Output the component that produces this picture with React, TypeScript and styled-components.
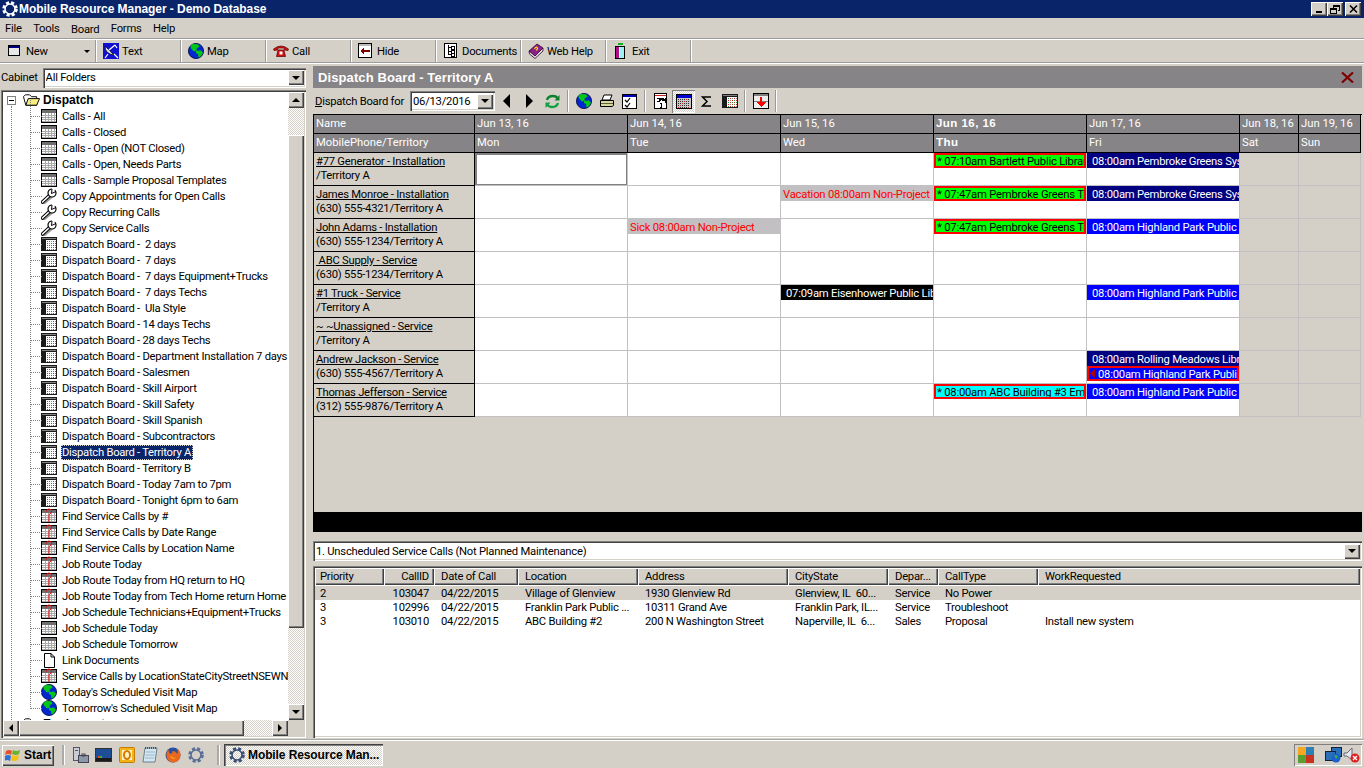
import React from 'react';
import styled, { createGlobalStyle, css } from 'styled-components';

const face = '#d4d0c8';
const headGray = '#868486';
const gridLine = '#c2c0c2';
const uiFont = `Roboto, 'Liberation Sans', Arial, sans-serif`;
const boldFont = `'Liberation Sans', Arial, sans-serif`;

const raised = css`
  box-shadow: inset 1px 1px #fff, inset -1px -1px #404040, inset -2px -2px #808080;
`;
const sunken = css`
  box-shadow: inset 1px 1px #808080, inset 2px 2px #404040, inset -1px -1px #fff, inset -2px -2px ${face};
`;
const dither = css`
  background: repeating-conic-gradient(#fff 0 25%, ${face} 0 50%) 0 0 / 2px 2px;
`;

const GlobalStyle = createGlobalStyle`
  html, body {
    margin: 0;
    padding: 0;
    width: 1364px;
    height: 768px;
    overflow: hidden;
    background: ${face};
    font-family: ${uiFont};
    font-size: 11.25px;
    letter-spacing: -0.25px;
    color: #000;
  }
  * { box-sizing: border-box; }
`;

const Page = styled.div`
  width: 1364px;
  height: 768px;
  display: flex;
  flex-flow: column;
  overflow: hidden;
`;

/* ---------- window chrome ---------- */

const TitleBar = styled.div`
  height: 18px;
  flex: none;
  display: flex;
  align-items: center;
  background: #0a246a;
  color: #fff;
  font-family: ${boldFont};
  font-weight: bold;
  font-size: 12px;
  padding: 0 3px 0 2px;
`;
const TitleText = styled.span`
  flex: 1;
  margin-left: 1px;
  letter-spacing: -0.05px;
`;
const WinButton = styled.div<{ $gap?: number }>`
  width: 16px;
  height: 14px;
  display: flex;
  align-items: center;
  justify-content: center;
  background: ${face};
  margin-left: ${(p) => p.$gap ?? 0}px;
  ${raised}
`;

const MenuBar = styled.div`
  height: 20px;
  flex: none;
  display: flex;
  align-items: center;
  padding-left: 5px;
  gap: 11.5px;
`;
const MenuItem = styled.span<{ $low?: boolean }>`
  position: relative;
  top: ${(p) => (p.$low ? 1 : 0)}px;
`;

const ToolBar = styled.div`
  height: 26px;
  flex: none;
  display: flex;
  border-top: 1px solid #9a9a9a;
  box-shadow: inset 0 1px #fff;
  border-bottom: 1px solid #fff;
  padding: 1px 0 1px;
  position: relative;
  &::after {
    content: '';
    position: absolute;
    left: 0;
    right: 0;
    bottom: 0;
    height: 1px;
    background: #9a9a9a;
  }
`;
const ToolButton = styled.div<{ $width?: number }>`
  width: ${(p) => p.$width ?? 85}px;
  flex: none;
  display: flex;
  align-items: center;
  gap: 3px;
  padding-left: 6px;
  border-right: 1px solid #9a9a9a;
  box-shadow: 1px 0 #fff;
  position: relative;
`;
const ToolIconSlot = styled.span`
  display: inline-flex;
  width: 17px;
  justify-content: center;
  flex: none;
`;
const DropMark = styled.span`
  position: absolute;
  right: 5px;
  top: 10px;
  border: 3px solid transparent;
  border-top: 3px solid #000;
  border-bottom: 0;
`;

/* ---------- main split ---------- */

const Main = styled.div`
  flex: 1;
  min-height: 0;
  display: flex;
  padding-right: 2px;
`;

const LeftPane = styled.div`
  width: 313px;
  flex: none;
  display: flex;
  flex-flow: column;
  padding: 3px 7px 1px 1px;
`;
const CabinetRow = styled.div`
  height: 23px;
  flex: none;
  display: flex;
  align-items: center;
  gap: 5px;
  padding-bottom: 2px;
`;
const Combo = styled.div<{ $h?: number }>`
  flex: 1;
  height: ${(p) => p.$h ?? 20}px;
  background: #fff;
  display: flex;
  align-items: center;
  padding: 0 2px 0 3px;
  ${sunken}
`;
const ComboText = styled.span`
  flex: 1;
  white-space: nowrap;
  overflow: hidden;
`;
const ArrowBtn = styled.div<{ $size?: number; $h?: number }>`
  width: ${(p) => p.$size ?? 16}px;
  height: ${(p) => p.$h ?? p.$size ?? 16}px;
  flex: none;
  display: flex;
  align-items: center;
  justify-content: center;
  background: ${face};
  ${raised}
`;
const Tri = styled.span<{ $dir: 'up' | 'down' | 'left' | 'right'; $s?: number; $c?: string }>`
  width: 0;
  height: 0;
  border: ${(p) => p.$s ?? 4}px solid transparent;
  ${(p) => {
    const c = p.$c ?? '#000';
    if (p.$dir === 'up') return `border-bottom-color:${c};border-top:0;`;
    if (p.$dir === 'down') return `border-top-color:${c};border-bottom:0;`;
    if (p.$dir === 'left') return `border-right-color:${c};border-left:0;`;
    return `border-left-color:${c};border-right:0;`;
  }}
`;

const TreeBox = styled.div`
  flex: 1;
  min-height: 0;
  display: grid;
  grid-template-columns: 1fr 16px;
  grid-template-rows: 1fr 16px;
  padding: 2px;
  background: #fff;
  ${sunken}
`;
const TreeBody = styled.div`
  position: relative;
  overflow: hidden;
  min-height: 0;
  background: #fff;
  &::before {
    content: '';
    position: absolute;
    left: 8px;
    top: 14px;
    bottom: 0;
    border-left: 1px dotted #808080;
  }
`;
const TreeHead = styled.div`
  height: 16px;
  display: flex;
  align-items: center;
  font-family: ${boldFont};
  font-weight: bold;
  font-size: 12px;
  letter-spacing: 0;
  padding-left: 4px;
  gap: 3px;
`;
const Plus = styled.span`
  width: 9px;
  height: 9px;
  flex: none;
  border: 1px solid #808080;
  position: relative;
  background: #fff;
  margin-right: 4px;
  &::after {
    content: '';
    position: absolute;
    left: 1px;
    right: 1px;
    top: 3px;
    height: 1px;
    background: #000;
  }
`;
const TreeRow = styled.div`
  height: 16px;
  position: relative;
  display: flex;
  align-items: center;
  padding-left: 38px;
  gap: 4px;
  white-space: nowrap;
  &::before {
    content: '';
    position: absolute;
    left: 27px;
    top: -8px;
    width: 11px;
    height: 16px;
    border-left: 1px dotted #808080;
    border-bottom: 1px dotted #808080;
  }
`;
const TreeLabel = styled.span<{ $selected?: boolean }>`
  padding: 0 2px 0 1px;
  height: 15px;
  line-height: 15px;
  letter-spacing: -0.28px;
  white-space: pre;
  ${(p) =>
    p.$selected &&
    css`
      background: #0a246a;
      color: #fff;
      outline: 1px dotted #d4d0c8;
      outline-offset: -1px;
    `}
`;

const VScroll = styled.div`
  display: flex;
  flex-flow: column;
  min-height: 0;
`;
const ScrollTrack = styled.div<{ $size: number }>`
  flex: ${(p) => (p.$size ? `none` : 1)};
  ${(p) => (p.$size ? `height:${p.$size}px;` : '')}
  ${dither}
`;
const VThumb = styled.div`
  flex: none;
  height: 493px;
  background: ${face};
  ${raised}
`;
const HScroll = styled.div`
  display: flex;
`;
const HTrack = styled.div`
  flex: 1;
  ${dither}
`;
const HThumb = styled.div`
  flex: none;
  width: 225px;
  background: ${face};
  ${raised}
`;
const Corner = styled.div`
  background: ${face};
`;

/* ---------- right side ---------- */

const RightPane = styled.div`
  flex: 1;
  min-width: 0;
  display: flex;
  flex-flow: column;
  padding: 2px 0 1px;
`;
const PanelTitle = styled.div`
  height: 22px;
  flex: none;
  background: ${headGray};
  color: #fff;
  font-family: ${boldFont};
  font-weight: bold;
  font-size: 13px;
  display: flex;
  align-items: center;
  justify-content: space-between;
  padding: 0 8px 0 5px;
  letter-spacing: 0.1px;
`;
const BoardBar = styled.div`
  height: 26px;
  flex: none;
  display: flex;
  align-items: center;
  padding-left: 2px;
`;
const BoardLabel = styled.span`
  width: 95px;
  flex: none;
  white-space: nowrap;
  u { text-underline-offset: 1px; }
`;
const DateBox = styled.div`
  width: 85px;
  height: 20px;
  flex: none;
  background: #fff;
  display: flex;
  align-items: center;
  padding: 0 2px 0 3px;
  ${sunken}
`;
const BarBtn = styled.div<{ $active?: boolean }>`
  width: 23px;
  height: 23px;
  flex: none;
  display: flex;
  align-items: center;
  justify-content: center;
  ${(p) =>
    p.$active &&
    css`
      ${dither}
      box-shadow: inset 1px 1px #808080, inset -1px -1px #fff;
    `}
`;
const BarSep = styled.div`
  width: 8px;
  height: 22px;
  flex: none;
  position: relative;
  &::before {
    content: '';
    position: absolute;
    left: 3px;
    top: 0;
    bottom: 0;
    width: 1px;
    background: #9a9a9a;
    box-shadow: 1px 0 #fff;
  }
`;

const Board = styled.div`
  height: 418px;
  flex: none;
  display: flex;
  flex-flow: column;
  border-left: 1px solid #000;
  position: relative;
  border-bottom: 20px solid #000;
`;
const BoardGrid = styled.div`
  display: grid;
  grid-template-columns: 161px repeat(5, 153px) 59px 62px;
  grid-template-rows: 19px 19px repeat(8, 33px);
  border-top: 1px solid #000;
  width: 1048px;
`;
const HeadCell = styled.div<{ $bold?: boolean }>`
  background: ${headGray};
  color: #fff;
  border-right: 1px solid #000;
  border-bottom: 1px solid #000;
  padding-left: 2px;
  line-height: 17px;
  white-space: nowrap;
  overflow: hidden;
  letter-spacing: 0;
  ${(p) => (p.$bold ? `font-family:${boldFont};font-weight:bold;font-size:11.5px;letter-spacing:0.45px;` : '')}
`;
const NameCell = styled.div`
  background: ${face};
  border-right: 1px solid #000;
  border-bottom: 1px solid #000;
  padding: 2px 0 0 2px;
  line-height: 14px;
  white-space: nowrap;
  overflow: hidden;
`;
const NameLine = styled.div`
  text-decoration: underline;
  text-underline-offset: 1px;
  white-space: pre;
`;
const DayCell = styled.div<{ $weekend?: boolean; $focus?: boolean }>`
  background: ${(p) => (p.$weekend ? face : '#fff')};
  border-right: 1px solid ${gridLine};
  border-bottom: 1px solid ${gridLine};
  overflow: hidden;
  display: flex;
  flex-flow: column;
  ${(p) => p.$focus && `box-shadow: inset 1px 1px #808080, inset -1px -1px #808080, inset 2px 2px #808080;`}
`;
type Kind = 'navy' | 'blue' | 'black' | 'green' | 'cyan' | 'off' | 'navyAlert';
const kindStyle: Record<Kind, string> = {
  navy: 'background:#000080;color:#fff;padding-left:5px;line-height:17px;',
  blue: 'background:#0000ff;color:#fff;padding-left:5px;line-height:17px;',
  black: 'background:#000;color:#fff;padding-left:5px;line-height:17px;',
  green: 'background:#00ff00;color:#000;border:2px solid #f00;padding-left:1px;line-height:13px;',
  cyan: 'background:#00ffff;color:#000;border:2px solid #f00;padding-left:1px;line-height:13px;',
  off: `background:#c2c0c2;color:#f00;padding-left:2px;line-height:17px;`,
  navyAlert: 'background:#0000ff;color:#fff;border:2px solid #f00;padding-left:9px;line-height:13px;',
};
const EventBar = styled.div<{ $kind: Kind }>`
  height: 15px;
  flex: none;
  white-space: pre;
  overflow: hidden;
  position: relative;
  letter-spacing: -0.22px;
  ${(p) => kindStyle[p.$kind]}
`;
const AlertMark = styled.span`
  position: absolute;
  left: 1px;
  top: 1px;
  width: 5px;
  height: 9px;
  background: #b00000;
  clip-path: polygon(100% 0, 100% 100%, 0 50%);
`;

const QueueCombo = styled(Combo)`
  flex: none;
  width: 100%;
  margin-top: 9px;
`;
const ListBox = styled.div`
  flex: 1;
  min-height: 0;
  margin-top: 5px;
  background: #fff;
  padding: 2px;
  ${sunken}
`;
const listColumns = '69px 50px 84px 120px 150px 100px 50px 100px 322px';
const ListHead = styled.div`
  display: grid;
  grid-template-columns: ${listColumns};
  height: 17px;
  margin-bottom: 1px;
`;
const ListHeadCell = styled.div<{ $right?: boolean; $first?: boolean }>`
  background: ${face};
  padding: 0 5px 0 ${(p) => (p.$first ? 5 : 7)}px;
  line-height: 17px;
  white-space: nowrap;
  overflow: hidden;
  text-align: ${(p) => (p.$right ? 'right' : 'left')};
  ${raised}
`;
const ListRow = styled.div<{ $selected?: boolean }>`
  display: grid;
  grid-template-columns: ${listColumns};
  height: 14px;
  line-height: 16px;
  background: ${(p) => (p.$selected ? face : '#fff')};
`;
const ListCell = styled.div<{ $right?: boolean; $first?: boolean }>`
  padding: 0 5px 0 ${(p) => (p.$first ? 5 : 7)}px;
  white-space: pre;
  overflow: hidden;
  text-align: ${(p) => (p.$right ? 'right' : 'left')};
`;

/* ---------- taskbar ---------- */

const TaskBar = styled.div`
  height: 29px;
  flex: none;
  display: flex;
  align-items: center;
  border-top: 1px solid #a8a8a8;
  box-shadow: inset 0 1px #fff;
  padding: 2px 2px 0 2px;
`;
const StartButton = styled.div`
  width: 52px;
  height: 21px;
  flex: none;
  display: flex;
  align-items: center;
  gap: 3px;
  padding-left: 3px;
  font-family: ${boldFont};
  font-weight: bold;
  font-size: 12px;
  letter-spacing: 0;
  ${raised}
`;
const TaskSep = styled.div<{ $left: number }>`
  width: 2px;
  height: 20px;
  flex: none;
  margin: 0 5px 0 ${(p) => p.$left}px;
  background: #aaa;
  box-shadow: 1px 0 #fff;
`;
const QuickIcon = styled.div`
  width: 23px;
  height: 20px;
  flex: none;
  display: flex;
  align-items: center;
  justify-content: center;
`;
const TaskButton = styled.div`
  width: 159px;
  height: 22px;
  flex: none;
  display: flex;
  align-items: center;
  gap: 3px;
  padding-left: 5px;
  font-family: ${boldFont};
  font-weight: bold;
  font-size: 12px;
  letter-spacing: -0.1px;
  white-space: nowrap;
  ${dither}
  box-shadow: inset 1px 1px #404040, inset 2px 2px #808080, inset -1px -1px #fff;
`;
const TaskSpacer = styled.div`
  flex: 1;
`;
const Tray = styled.div`
  width: 68px;
  height: 22px;
  flex: none;
  display: flex;
  align-items: center;
  gap: 11px;
  padding-left: 4px;
  box-shadow: inset 1px 1px #808080, inset -1px -1px #fff;
`;
const TrayGroup = styled.div`
  display: flex;
  align-items: center;
  gap: 1px;
`;

/* ---------- icons ---------- */

const Svg: React.FC<{ w?: number; h?: number; vb?: string; crisp?: boolean; children: React.ReactNode }> = ({
  w = 16,
  h = 16,
  vb,
  crisp,
  children,
}) => (
  <svg
    width={w}
    height={h}
    viewBox={vb ?? `0 0 ${w} ${h}`}
    shapeRendering={crisp ? 'crispEdges' : undefined}
    style={{ display: 'block', flex: 'none' }}
  >
    {children}
  </svg>
);

const GridLines = () => (
  <>
    <rect x="0.5" y="0.5" width="15" height="13" fill="#fff" stroke="#000" />
    <rect x="1" y="1" width="14" height="3" fill="#6e6e6e" />
    {[4, 7, 10, 13].map((x) => (
      <line key={x} x1={x + 0.5} y1="4" x2={x + 0.5} y2="13" stroke="#a8a8a8" />
    ))}
    {[6, 8, 10, 12].map((y) => (
      <line key={y} x1="1" y1={y + 0.5} x2="15" y2={y + 0.5} stroke="#a8a8a8" />
    ))}
  </>
);
const GridIcon = () => (
  <Svg crisp>
    <g transform="translate(0 1)">
      <GridLines />
    </g>
  </Svg>
);
const FindIcon = () => (
  <Svg>
    <g transform="translate(0 1)" shapeRendering="crispEdges">
      <GridLines />
    </g>
    <path d="M5.5 3.5 Q5.5 1 8 1 Q10.5 1 10.5 3.5 Q10.5 5.5 8 6.5 L8 14" fill="none" stroke="#f00" strokeWidth="1" />
  </Svg>
);
const BoardIcon: React.FC = () => (
  <Svg crisp>
    <rect x="0" y="1" width="16" height="14" fill="#1a1a1a" />
    <rect x="1" y="2" width="14" height="1" fill="#808080" />
    <rect x="5" y="4" width="10" height="10" fill="#fff" />
    {[5, 7, 9, 11, 13].map((y) =>
      [6, 8, 10, 12, 14].map((x) => (
        <rect
          key={`${x}-${y}`}
          x={x}
          y={y}
          width="1"
          height="1"
          fill={(x + y) % 4 === 1 ? '#e02020' : (x * y) % 3 === 0 ? '#10a030' : '#8a8a8a'}
        />
      )),
    )}
  </Svg>
);
const WrenchIcon = () => (
  <Svg>
    <path d="M3 15 L10 9" stroke="#9a9a9a" strokeWidth="3" strokeLinecap="round" />
    <path d="M1.5 14 L9 7" stroke="#000" strokeWidth="3.6" strokeLinecap="round" />
    <path d="M1.5 14 L9 7" stroke="#fff" strokeWidth="1.6" strokeLinecap="round" />
    <circle cx="11" cy="5" r="4" fill="#fff" stroke="#000" strokeWidth="1.2" />
    <path d="M10.5 5 L15.8 0 L11 0 Z" fill="#fff" />
    <path d="M10.5 5.5 L11 1 M10.5 5.5 L15 3.5" stroke="#000" strokeWidth="1" />
  </Svg>
);
const DocIcon = () => (
  <Svg>
    <path d="M3.5 1.5 H10 L13.5 5 V15.5 H3.5 Z M10 1.5 V5 H13.5" fill="#fff" stroke="#000" />
  </Svg>
);
const GlobeIcon: React.FC<{ s?: number }> = ({ s = 16 }) => (
  <Svg w={s} h={s} vb="0 0 16 16">
    <circle cx="8" cy="8" r="7.6" fill="#0028d0" stroke="#000040" strokeWidth="0.8" />
    <path d="M4.5 1 L10 1.2 L11.5 3.5 L8.5 5.5 L9 7.5 L6 8.5 L3 5.5 L2.5 3 Z" fill="#00c814" />
    <path d="M8 8 L13 7.5 L15 10 L12.5 13.5 L10.5 14.5 L10 11 L8 10 Z" fill="#00c814" />
  </Svg>
);
const FolderIcon = () => (
  <Svg w={17} h={14} vb="0 0 18 14">
    <path d="M0.5 3.5 L2.5 1.5 H7 L9 3.5 H14.5 V12.5 H3 Z" fill="#fff" stroke="#000" />
    <path d="M3 12.5 L5.5 5.5 H17.5 L14.5 12.5 Z" fill="#f6ec80" stroke="#000" />
  </Svg>
);
const WindowIcon = () => (
  <Svg crisp w={13} h={12}>
    <rect x="0.5" y="0.5" width="11" height="10" fill="#e8e8e8" stroke="#000" />
    <rect x="1" y="1" width="10" height="2" fill="#000080" />
  </Svg>
);
const DishIcon = () => (
  <Svg>
    <rect x="0" y="0" width="16" height="16" fill="#1010d0" />
    <path d="M2 3 Q2 11 11 12 Z" fill="#e0e0e0" stroke="#000" strokeWidth="0.7" />
    <path d="M6 7 L12 2 M12 2 L14 5 M11 11 L15 15 M5 11 L2 15" stroke="#fff" strokeWidth="1.2" />
  </Svg>
);
const PhoneIcon = () => (
  <Svg w={16} h={14}>
    <path d="M0.5 5 Q8 -1 15.5 5 L15 6.5 L11.5 6 L11 4 H5 L4.5 6 L1 6.5 Z" fill="#d01010" stroke="#600" strokeWidth="0.7" />
    <path d="M3.5 12.5 L5 6 H11 L12.5 12.5 Z" fill="#d01010" stroke="#500" strokeWidth="0.7" />
    <rect x="6.5" y="7.5" width="3" height="3" fill="#fff" />
  </Svg>
);
const HideIcon = () => (
  <Svg crisp w={15} h={16}>
    <rect x="0.5" y="0.5" width="13" height="14" fill="#fff" stroke="#000" />
    <rect x="1" y="1" width="12" height="2" fill="#bbb" />
    <rect x="5" y="7" width="7" height="2" fill="#800000" />
    <path d="M2 8 L6 5 V11 Z" fill="#800000" />
  </Svg>
);
const DocsIcon = () => (
  <Svg crisp w={14} h={16}>
    <rect x="0.5" y="0.5" width="12" height="14" fill="#fff" stroke="#000" />
    <path d="M4.5 2 V12 M4.5 4.5 H7 M4.5 8 H7 M4.5 11.5 H7" stroke="#000" fill="none" />
    <rect x="7" y="3" width="3" height="3" fill="#fff" stroke="#000" />
    <rect x="7" y="7" width="3" height="3" fill="#fff" stroke="#000" />
    <rect x="7" y="10.5" width="3" height="3" fill="#fff" stroke="#000" />
  </Svg>
);
const BookIcon = () => (
  <Svg>
    <path d="M1 8 L9 1 L15 5 L7 13 Z" fill="#8c1f8c" stroke="#300030" strokeWidth="0.8" />
    <path d="M1 8 L1.5 11 L7 15.5 L15 8 L15 5 L7 13 Z" fill="#e6e0e6" stroke="#300030" strokeWidth="0.8" />
    <path d="M6.5 6 Q8 3 9.5 5 Q9.8 6.5 8 7.2" fill="none" stroke="#ffe000" strokeWidth="1.2" />
  </Svg>
);
const ExitIcon = () => (
  <Svg crisp w={11} h={16}>
    <rect x="3" y="0" width="5" height="2" fill="#10b020" />
    <rect x="0.5" y="3.5" width="9" height="12" fill="#fff" stroke="#000" />
    <rect x="1" y="4" width="3" height="11" fill="#b01090" />
    <rect x="5" y="4" width="4" height="11" fill="#a0f0f0" />
  </Svg>
);
const RefreshIcon = () => (
  <Svg w={15} h={15}>
    <path d="M2 6 Q3 2 8 2 Q11 2 12.5 4" fill="none" stroke="#108030" strokeWidth="2.4" />
    <path d="M14.5 1 V6.5 H9.5 Z" fill="#108030" />
    <path d="M13 9 Q12 13 7 13 Q4 13 2.5 11" fill="none" stroke="#10a040" strokeWidth="2.4" />
    <path d="M0.5 14 V8.5 H5.5 Z" fill="#10a040" />
  </Svg>
);
const PrinterIcon = () => (
  <Svg w={16} h={14}>
    <path d="M5 1 H13 L11 6 H3 Z" fill="#fff" stroke="#000" />
    <path d="M1.5 6.5 H14.5 V11.5 L13 12.5 H1.5 Z" fill="#d8d8a0" stroke="#000" />
    <rect x="2" y="9" width="12" height="1" fill="#606040" />
  </Svg>
);
const CheckListIcon = () => (
  <Svg w={15} h={15}>
    <rect x="0.5" y="0.5" width="14" height="14" fill="#fff" stroke="#000" />
    <rect x="1" y="1" width="13" height="2" fill="#0000c0" />
    <path d="M3 6 L5 8 L8 4 M3 11 L5 13 L8 9" fill="none" stroke="#000" strokeWidth="1.2" />
  </Svg>
);
const JanIcon = () => (
  <Svg crisp w={14} h={16}>
    <rect x="0.5" y="0.5" width="12" height="15" fill="#fff" stroke="#000" />
    <rect x="1" y="2" width="11" height="1" fill="#d02020" />
    <path d="M3 5 H5 V8 H3 M6 8 V5 H8 V8 M6 6.5 H8 M9 8 V5 L11 8 V5 M6 10 H7 V14 M5.5 14 H8" stroke="#000" fill="none" />
  </Svg>
);
const CalendarIcon = () => (
  <Svg crisp w={16} h={15}>
    <rect x="0.5" y="0.5" width="15" height="14" fill="#c8c8c8" stroke="#000" />
    <rect x="1" y="1" width="14" height="3" fill="#0000d0" />
    {[5, 7, 9, 11, 13].map((y) =>
      [2, 4, 6, 8, 10, 12].map((x) => (
        <rect key={`${x}${y}`} x={x} y={y} width="1" height="1" fill={(x + y) % 5 === 0 ? '#e02020' : '#303030'} />
      )),
    )}
  </Svg>
);
const SigmaIcon = () => (
  <Svg w={11} h={11}>
    <path d="M10 1 H1.5 L6 5.5 L1.5 10 H10" fill="none" stroke="#000" strokeWidth="1.5" />
  </Svg>
);
const DownArrowBoardIcon = () => (
  <Svg crisp w={16} h={16}>
    <rect x="0.5" y="0.5" width="15" height="15" fill="#eee" stroke="#000" />
    <rect x="1" y="1" width="14" height="2" fill="#808080" />
    <rect x="1" y="8" width="14" height="1" fill="#808080" />
    <rect x="7" y="4" width="2" height="6" fill="#f00" />
    <path d="M3 9 H13 L8 14 Z" fill="#f00" />
  </Svg>
);
const GearIcon: React.FC<{ s?: number; c?: string; hub?: string }> = ({ s = 16, c = '#fff', hub = 'transparent' }) => (
  <Svg w={s} h={s} vb="0 0 16 16">
    <circle cx="8" cy="8" r="6.3" fill="none" stroke={c} strokeWidth="3" strokeDasharray="3 2" />
    <circle cx="8" cy="8" r="5" fill={hub} stroke={c} strokeWidth="1.6" />
  </Svg>
);
const WinFlag = () => (
  <Svg>
    <path d="M1 4 Q4 2 7 4 L6 8 Q3 6 0 8 Z" fill="#e8502a" />
    <path d="M8 3 Q11 5 15 3 L14 7 Q11 9 7 7 Z" fill="#6cb02c" />
    <path d="M0 9 Q3 7 6 9 L5 14 Q2 12 -1 14 Z" fill="#2f6fd8" />
    <path d="M7 8 Q10 10 14 8 L13 13 Q9 15 6 13 Z" fill="#f6c012" />
  </Svg>
);
const ServerIcon = () => (
  <Svg w={17} h={18}>
    <rect x="1.5" y="1.5" width="6" height="13" fill="#c8ccd4" stroke="#556" />
    <rect x="3" y="4" width="3" height="1" fill="#556" />
    <rect x="6.5" y="9.5" width="10" height="7" fill="#8c97a8" stroke="#445" />
    <rect x="10" y="8" width="3" height="2" fill="none" stroke="#445" />
  </Svg>
);
const DesktopIcon = () => (
  <Svg w={17} h={15}>
    <rect x="0.5" y="0.5" width="16" height="13" fill="#1e4f96" stroke="#333" />
    <rect x="1" y="10" width="15" height="3" fill="#1a1a1a" />
    <rect x="3" y="8" width="2" height="2" fill="#e04030" />
    <rect x="5" y="8" width="2" height="2" fill="#40b040" />
  </Svg>
);
const OutlookIcon = () => (
  <Svg>
    <rect x="0.5" y="0.5" width="15" height="15" rx="1" fill="#f3b416" stroke="#c77a00" />
    <rect x="3" y="3" width="10" height="10" fill="#fff2c0" />
    <ellipse cx="8" cy="8" rx="3" ry="4" fill="none" stroke="#d87a00" strokeWidth="2" />
  </Svg>
);
const NotepadIcon = () => (
  <Svg>
    <path d="M3 1 H15 L13 15 H1 Z" fill="#d3e6f2" stroke="#6b7f8c" />
    <path d="M3 1 H15" stroke="#334" strokeDasharray="1 1" strokeWidth="1.5" />
    <path d="M4 5 H13 M3.5 8 H12.5 M3 11 H12" stroke="#9cb6c6" />
  </Svg>
);
const FirefoxIcon = () => (
  <Svg>
    <circle cx="8" cy="8" r="7.5" fill="#2a4f9c" />
    <path d="M3 2 Q1 6 1.5 9.5 Q3 15.5 8.5 15.5 Q15.5 15 15.5 8 Q15.5 4 12 1.5 Q13.5 5 12 7 Q11 4 7.5 4 Q8 6 5.5 7 Q3.5 5 3 2 Z" fill="#e8681c" />
    <path d="M5 9 Q8 14 12 10 Q10 12 7 10 Z" fill="#f9c02a" />
  </Svg>
);
const AvgIcon = () => (
  <Svg crisp>
    <rect x="0" y="0" width="8" height="8" fill="#f5a623" />
    <rect x="8" y="0" width="8" height="8" fill="#2f7fb5" />
    <rect x="0" y="8" width="8" height="8" fill="#5a9e2f" />
    <rect x="8" y="8" width="8" height="8" fill="#c8321e" />
  </Svg>
);
const NetIcon = () => (
  <Svg w={17} h={16}>
    <rect x="6.5" y="0.5" width="10" height="9" fill="#2a6fb8" stroke="#123" />
    <rect x="0.5" y="4.5" width="10" height="9" fill="#2a6fb8" stroke="#123" />
    <circle cx="11" cy="11" r="4.5" fill="#1d5fd0" />
    <path d="M9 8 L13 9 L11 12 Z" fill="#30c030" />
  </Svg>
);
const SpeakerIcon = () => (
  <Svg w={17} h={16}>
    <path d="M1 6 H4 L9 1 V13 L4 9 H1 Z" fill="#e4e8ee" stroke="#667" />
    <circle cx="12" cy="11" r="4.5" fill="#e02020" />
    <path d="M10 9 L14 13 M14 9 L10 13" stroke="#fff" strokeWidth="1.3" />
  </Svg>
);
const CloseCross = () => (
  <Svg w={13} h={11}>
    <path d="M1 0.5 L12 10.5 M12 0.5 L1 10.5" stroke="#800000" strokeWidth="2.2" />
  </Svg>
);

/* ---------- data ---------- */

type TreeKind = 'grid' | 'find' | 'board' | 'wrench' | 'doc' | 'globe';
const treeIcons: Record<TreeKind, React.ReactNode> = {
  grid: <GridIcon />,
  find: <FindIcon />,
  board: <BoardIcon />,
  wrench: <WrenchIcon />,
  doc: <DocIcon />,
  globe: <GlobeIcon />,
};
const treeItems: [TreeKind, string][] = [
  ['grid', 'Calls - All'],
  ['grid', 'Calls - Closed'],
  ['grid', 'Calls - Open (NOT Closed)'],
  ['grid', 'Calls - Open, Needs Parts'],
  ['grid', 'Calls - Sample Proposal Templates'],
  ['wrench', 'Copy Appointments for Open Calls'],
  ['wrench', 'Copy Recurring Calls'],
  ['wrench', 'Copy Service Calls'],
  ['board', 'Dispatch Board -  2 days'],
  ['board', 'Dispatch Board -  7 days'],
  ['board', 'Dispatch Board -  7 days Equipment+Trucks'],
  ['board', 'Dispatch Board -  7 days Techs'],
  ['board', 'Dispatch Board -  Ula Style'],
  ['board', 'Dispatch Board - 14 days Techs'],
  ['board', 'Dispatch Board - 28 days Techs'],
  ['board', 'Dispatch Board - Department Installation 7 days'],
  ['board', 'Dispatch Board - Salesmen'],
  ['board', 'Dispatch Board - Skill Airport'],
  ['board', 'Dispatch Board - Skill Safety'],
  ['board', 'Dispatch Board - Skill Spanish'],
  ['board', 'Dispatch Board - Subcontractors'],
  ['board', 'Dispatch Board - Territory A'],
  ['board', 'Dispatch Board - Territory B'],
  ['board', 'Dispatch Board - Today 7am to 7pm'],
  ['board', 'Dispatch Board - Tonight 6pm to 6am'],
  ['find', 'Find Service Calls by #'],
  ['find', 'Find Service Calls by Date Range'],
  ['find', 'Find Service Calls by Location Name'],
  ['find', 'Job Route Today'],
  ['find', 'Job Route Today from HQ return to HQ'],
  ['find', 'Job Route Today from Tech Home return Home'],
  ['find', 'Job Schedule Technicians+Equipment+Trucks'],
  ['grid', 'Job Schedule Today'],
  ['grid', 'Job Schedule Tomorrow'],
  ['doc', 'Link Documents'],
  ['find', 'Service Calls by LocationStateCityStreetNSEWN'],
  ['globe', "Today's Scheduled Visit Map"],
  ['globe', "Tomorrow's Scheduled Visit Map"],
];

const toolButtons: { label: string; icon: React.ReactNode; width?: number; drop?: boolean }[] = [
  { label: 'New', icon: <WindowIcon />, width: 96, drop: true },
  { label: 'Text', icon: <DishIcon /> },
  { label: 'Map', icon: <GlobeIcon /> },
  { label: 'Call', icon: <PhoneIcon /> },
  { label: 'Hide', icon: <HideIcon /> },
  { label: 'Documents', icon: <DocsIcon /> },
  { label: 'Web Help', icon: <BookIcon /> },
  { label: 'Exit', icon: <ExitIcon /> },
];

const days = [
  ['Jun 13, 16', 'Mon'],
  ['Jun 14, 16', 'Tue'],
  ['Jun 15, 16', 'Wed'],
  ['Jun 16, 16', 'Thu'],
  ['Jun 17, 16', 'Fri'],
  ['Jun 18, 16', 'Sat'],
  ['Jun 19, 16', 'Sun'],
];

type Ev = { day: number; kind: Kind; text: string; mark?: boolean };
const people: { name: string; sub: string; events: Ev[] }[] = [
  {
    name: '#77 Generator - Installation',
    sub: '/Territory A',
    events: [
      { day: 3, kind: 'green', text: '* 07:10am Bartlett Public Library' },
      { day: 4, kind: 'navy', text: '08:00am Pembroke Greens System' },
    ],
  },
  {
    name: 'James Monroe - Installation',
    sub: '(630) 555-4321/Territory A',
    events: [
      { day: 2, kind: 'off', text: 'Vacation 08:00am Non-Project' },
      { day: 3, kind: 'green', text: '* 07:47am Pembroke Greens Trouble' },
      { day: 4, kind: 'navy', text: '08:00am Pembroke Greens System' },
    ],
  },
  {
    name: 'John Adams - Installation',
    sub: '(630) 555-1234/Territory A',
    events: [
      { day: 1, kind: 'off', text: 'Sick 08:00am Non-Project' },
      { day: 3, kind: 'green', text: '* 07:47am Pembroke Greens Trouble' },
      { day: 4, kind: 'blue', text: '08:00am Highland Park Public' },
    ],
  },
  { name: ' ABC Supply - Service', sub: '(630) 555-1234/Territory A', events: [] },
  {
    name: '#1 Truck - Service',
    sub: '/Territory A',
    events: [
      { day: 2, kind: 'black', text: '07:09am Eisenhower Public Library' },
      { day: 4, kind: 'blue', text: '08:00am Highland Park Public' },
    ],
  },
  { name: '~ ~Unassigned - Service', sub: '/Territory A', events: [] },
  {
    name: 'Andrew Jackson - Service',
    sub: '(630) 555-4567/Territory A',
    events: [
      { day: 4, kind: 'navy', text: '08:00am Rolling Meadows Library' },
      { day: 4, kind: 'navyAlert', text: '08:00am Highland Park Public Library', mark: true },
    ],
  },
  {
    name: 'Thomas Jefferson - Service',
    sub: '(312) 555-9876/Territory A',
    events: [
      { day: 3, kind: 'cyan', text: '* 08:00am ABC Building #3 Emergency' },
      { day: 4, kind: 'blue', text: '08:00am Highland Park Public' },
    ],
  },
];

const listHeads = ['Priority', 'CallID', 'Date of Call', 'Location', 'Address', 'CityState', 'Depar...', 'CallType', 'WorkRequested'];
const listRows = [
  ['2', '103047', '04/22/2015', 'Village of Glenview', '1930 Glenview Rd', 'Glenview, IL  60...', 'Service', 'No Power', ''],
  ['3', '102996', '04/22/2015', 'Franklin Park Public ...', '10311 Grand Ave', 'Franklin Park, IL...', 'Service', 'Troubleshoot', ''],
  ['3', '103010', '04/22/2015', 'ABC Building #2', '200 N Washington Street', 'Naperville, IL  6...', 'Sales', 'Proposal', 'Install new system'],
];

const App: React.FC = () => {
  return (
    <Page>
      <GlobalStyle />
      <TitleBar>
        <GearIcon />
        <TitleText>Mobile Resource Manager - Demo Database</TitleText>
        <WinButton>
          <Svg crisp w={8} h={8}>
            <rect x="1" y="6" width="6" height="2" fill="#000" />
          </Svg>
        </WinButton>
        <WinButton>
          <Svg crisp w={10} h={9}>
            <path d="M3.5 2.5 V0.5 H9.5 V5.5 H7.5 M0.5 3.5 H6.5 V8.5 H0.5 Z" fill="none" stroke="#000" />
            <rect x="3" y="0" width="7" height="2" fill="#000" />
            <rect x="0" y="3" width="7" height="2" fill="#000" />
          </Svg>
        </WinButton>
        <WinButton $gap={2}>
          <Svg w={9} h={8}>
            <path d="M1 0.5 L8 7.5 M8 0.5 L1 7.5" stroke="#000" strokeWidth="1.5" />
          </Svg>
        </WinButton>
      </TitleBar>

      <MenuBar>
        <MenuItem>File</MenuItem>
        <MenuItem>Tools</MenuItem>
        <MenuItem $low>Board</MenuItem>
        <MenuItem>Forms</MenuItem>
        <MenuItem>Help</MenuItem>
      </MenuBar>

      <ToolBar>
        {toolButtons.map((b) => (
          <ToolButton key={b.label} $width={b.width}>
            <ToolIconSlot>{b.icon}</ToolIconSlot>
            {b.label}
            {b.drop && <DropMark />}
          </ToolButton>
        ))}
      </ToolBar>

      <Main>
        <LeftPane>
          <CabinetRow>
            Cabinet
            <Combo>
              <ComboText>All Folders</ComboText>
              <ArrowBtn $size={16} $h={15}>
                <Tri $dir="down" />
              </ArrowBtn>
            </Combo>
          </CabinetRow>
          <TreeBox>
            <TreeBody>
              <TreeHead>
                <Plus />
                <FolderIcon />
                Dispatch
              </TreeHead>
              {treeItems.map(([kind, label]) => (
                <TreeRow key={label}>
                  {treeIcons[kind]}
                  <TreeLabel $selected={label === 'Dispatch Board - Territory A'}>{label}</TreeLabel>
                </TreeRow>
              ))}
              <TreeHead>
                <Plus />
                <FolderIcon />
                Equipment
              </TreeHead>
            </TreeBody>
            <VScroll>
              <ArrowBtn>
                <Tri $dir="up" />
              </ArrowBtn>
              <ScrollTrack $size={27} />
              <VThumb />
              <ScrollTrack $size={0} />
              <ArrowBtn>
                <Tri $dir="down" />
              </ArrowBtn>
            </VScroll>
            <HScroll>
              <ArrowBtn>
                <Tri $dir="left" />
              </ArrowBtn>
              <HThumb />
              <HTrack />
              <ArrowBtn>
                <Tri $dir="right" />
              </ArrowBtn>
            </HScroll>
            <Corner />
          </TreeBox>
        </LeftPane>

        <RightPane>
          <PanelTitle>
            Dispatch Board - Territory A
            <CloseCross />
          </PanelTitle>
          <BoardBar>
            <BoardLabel>
              <u>D</u>ispatch Board for
            </BoardLabel>
            <DateBox>
              <ComboText>06/13/2016</ComboText>
              <ArrowBtn $size={16} $h={15}>
                <Tri $dir="down" />
              </ArrowBtn>
            </DateBox>
            <BarBtn>
              <Tri $dir="left" $s={7} />
            </BarBtn>
            <BarBtn>
              <Tri $dir="right" $s={7} />
            </BarBtn>
            <BarBtn>
              <RefreshIcon />
            </BarBtn>
            <BarSep />
            <BarBtn>
              <GlobeIcon />
            </BarBtn>
            <BarBtn>
              <PrinterIcon />
            </BarBtn>
            <BarBtn>
              <CheckListIcon />
            </BarBtn>
            <BarSep />
            <BarBtn>
              <JanIcon />
            </BarBtn>
            <BarBtn $active>
              <CalendarIcon />
            </BarBtn>
            <BarBtn>
              <SigmaIcon />
            </BarBtn>
            <BarBtn>
              <BoardIcon />
            </BarBtn>
            <BarSep />
            <BarBtn>
              <DownArrowBoardIcon />
            </BarBtn>
            <BarSep />
          </BoardBar>

          <Board>
            <BoardGrid>
              <HeadCell>Name</HeadCell>
              {days.map(([d], i) => (
                <HeadCell key={d} $bold={i === 3}>
                  {d}
                </HeadCell>
              ))}
              <HeadCell>MobilePhone/Territory</HeadCell>
              {days.map(([d, w], i) => (
                <HeadCell key={w} $bold={i === 3}>
                  {w}
                </HeadCell>
              ))}
              {people.map((p, r) => (
                <React.Fragment key={p.name}>
                  <NameCell>
                    <NameLine>{p.name}</NameLine>
                    {p.sub}
                  </NameCell>
                  {days.map((_, d) => (
                    <DayCell key={d} $weekend={d > 4} $focus={r === 0 && d === 0}>
                      {p.events
                        .filter((e) => e.day === d)
                        .map((e) => (
                          <EventBar key={e.text} $kind={e.kind}>
                            {e.mark && <AlertMark />}
                            {e.text}
                          </EventBar>
                        ))}
                    </DayCell>
                  ))}
                </React.Fragment>
              ))}
            </BoardGrid>
          </Board>

          <QueueCombo>
            <ComboText>1. Unscheduled Service Calls (Not Planned Maintenance)</ComboText>
            <ArrowBtn $size={16} $h={15}>
              <Tri $dir="down" />
            </ArrowBtn>
          </QueueCombo>

          <ListBox>
            <ListHead>
              {listHeads.map((h, i) => (
                <ListHeadCell key={h} $right={i === 1} $first={i === 0}>
                  {h}
                </ListHeadCell>
              ))}
            </ListHead>
            {listRows.map((row, r) => (
              <ListRow key={row[1]} $selected={r === 0}>
                {row.map((c, i) => (
                  <ListCell key={i} $right={i === 1} $first={i === 0}>
                    {c}
                  </ListCell>
                ))}
              </ListRow>
            ))}
          </ListBox>
        </RightPane>
      </Main>

      <TaskBar>
        <StartButton>
          <WinFlag />
          Start
        </StartButton>
        <TaskSep $left={8} />
        <QuickIcon>
          <ServerIcon />
        </QuickIcon>
        <QuickIcon>
          <DesktopIcon />
        </QuickIcon>
        <QuickIcon>
          <OutlookIcon />
        </QuickIcon>
        <QuickIcon>
          <NotepadIcon />
        </QuickIcon>
        <QuickIcon>
          <FirefoxIcon />
        </QuickIcon>
        <QuickIcon>
          <GearIcon c="#5a6f96" />
        </QuickIcon>
        <TaskSep $left={10} />
        <TaskButton>
          <GearIcon c="#3a4f76" />
          Mobile Resource Man...
        </TaskButton>
        <TaskSpacer />
        <Tray>
          <AvgIcon />
          <TrayGroup>
            <NetIcon />
            <SpeakerIcon />
          </TrayGroup>
        </Tray>
      </TaskBar>
    </Page>
  );
};

export default App;
